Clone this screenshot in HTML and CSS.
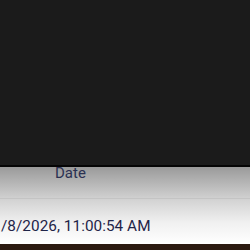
FILE: index.html
```html
<!DOCTYPE html>
<html>
<head>
<meta charset="utf-8">
<link rel="stylesheet" href="styles.css">
</head>
<body>
<div class="screen">
  <div class="backdrop"></div>
  <div class="panel">
    <div class="head"><span class="label">Date</span></div>
    <div class="row"><span class="value">/8/2026, 11:00:54 AM</span></div>
  </div>
  <div class="footer"></div>
</div>
</body>
</html>
```
FILE: styles.css
```css
html, body {
  margin: 0;
  padding: 0;
  background: #1b1b1b;
}
.screen {
  width: 250px;
  height: 250px;
  display: flex;
  flex-direction: column;
  overflow: hidden;
  font-family: Roboto, "Liberation Sans", sans-serif;
}
.backdrop {
  height: 165px;
  flex: none;
  background: #1b1b1b;
  border-bottom: 2px solid #050505;
}
.panel {
  height: 77px;
  flex: none;
  background: linear-gradient(#9a9a9a, #d2d2d2 42%, #f0f0f0 72%, #ffffff);
  display: flex;
  flex-direction: column;
}
.head {
  height: 32px;
  border-bottom: 1px solid #c4c4c4;
  padding-left: 55px;
  box-sizing: border-box;
}
.label {
  font-size: 15px;
  line-height: 14px;
  margin-top: -1px;
  color: #2b3152;
  display: block;
}
.row {
  flex: 1;
  display: flex;
  align-items: center;
  padding-top: 8px;
}
.value {
  font-size: 15.3px;
  letter-spacing: 0.05px;
  color: #1f2448;
  margin-left: 1px;
}
.footer {
  flex: 1;
  background: #2b1a10;
}
```
